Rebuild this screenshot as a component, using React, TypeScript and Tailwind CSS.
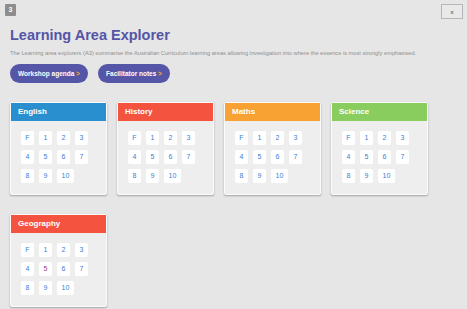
import React from 'react';

const areas = [
  { name: 'English', color: 'bg-[#2a8fce]' },
  { name: 'History', color: 'bg-[#f4533f]' },
  { name: 'Maths', color: 'bg-[#f7a233]' },
  { name: 'Science', color: 'bg-[#88cd5e]' },
  { name: 'Geography', color: 'bg-[#f4533f]', highlight: '5' },
];

const levels = ['F', '1', '2', '3', '4', '5', '6', '7', '8', '9', '10'];

function AreaCard({ name, color, highlight }: { name: string; color: string; highlight?: string }) {
  return (
    <div className="w-[97px] h-[93px] bg-[#eeeeee] border border-[#fbfbfb] rounded-[2px] shadow-[0_1px_2px_rgba(0,0,0,0.3)]">
      {/* Header */}
      <div className={`${color} h-[18px] flex items-center pl-[7px] text-white text-[8px] font-bold`}>
        {name}
      </div>
      {/* Level buttons */}
      <div className="pl-[10px] pt-[10px] w-[84px] flex flex-wrap gap-x-[5px] gap-y-[5px]">
        {levels.map((lvl) => (
          <div
            key={lvl}
            className={`h-[14px] ${lvl === '10' ? 'w-[17px]' : 'w-[13px]'} bg-white rounded-[2px] flex items-center justify-center text-[7px] ${
              lvl === highlight ? 'text-[#9a3d8d]' : 'text-[#3a7fd5]'
            }`}
          >
            {lvl}
          </div>
        ))}
      </div>
    </div>
  );
}

export default function App() {
  return (
    <div className="w-full h-[309px] bg-[#e6e6e6] overflow-hidden font-['Liberation_Sans',Arial,sans-serif]">
      {/* Top bar */}
      <div className="flex justify-between items-start pt-[4px] pl-[5px] pr-[4px]">
        <div className="w-[11px] h-[12px] bg-[#8d8d8d] rounded-[1px] flex items-center justify-center text-white text-[7px] font-bold">
          3
        </div>
        <button className="w-[22px] h-[15px] border border-[#b7b7b7] bg-[#e9e9e9] flex items-center justify-center text-[6px] text-[#333] leading-none">
          x
        </button>
      </div>

      {/* Title */}
      <div className="px-[10px]">
        <h1 className="mt-[8px] text-[14.5px] leading-[17px] font-bold text-[#5455a6]">Learning Area Explorer</h1>
        <p className="mt-[6px] text-[5.7px] leading-[7px] text-[#8f8f8f]">
          The Learning area explorers (A3) summarise the Australian Curriculum learning areas allowing investigation into where the essence is most strongly emphasised.
        </p>
        <div className="mt-[7px] flex gap-[10px]">
          <button className="w-[78px] h-[19px] rounded-full bg-[#5556a7] text-white text-[6.5px] font-bold flex items-center justify-center">
            Workshop agenda&nbsp;<span className="text-[#f7a233]">&gt;</span>
          </button>
          <button className="w-[72px] h-[19px] rounded-full bg-[#5556a7] text-white text-[6.5px] font-bold flex items-center justify-center">
            Facilitator notes&nbsp;<span className="text-[#f7a233]">&gt;</span>
          </button>
        </div>

        {/* Cards */}
        <div className="mt-[19px] flex flex-wrap gap-x-[10px] gap-y-[19px]">
          {areas.map((a) => (
            <AreaCard key={a.name} name={a.name} color={a.color} highlight={a.highlight} />
          ))}
        </div>
      </div>
    </div>
  );
}
